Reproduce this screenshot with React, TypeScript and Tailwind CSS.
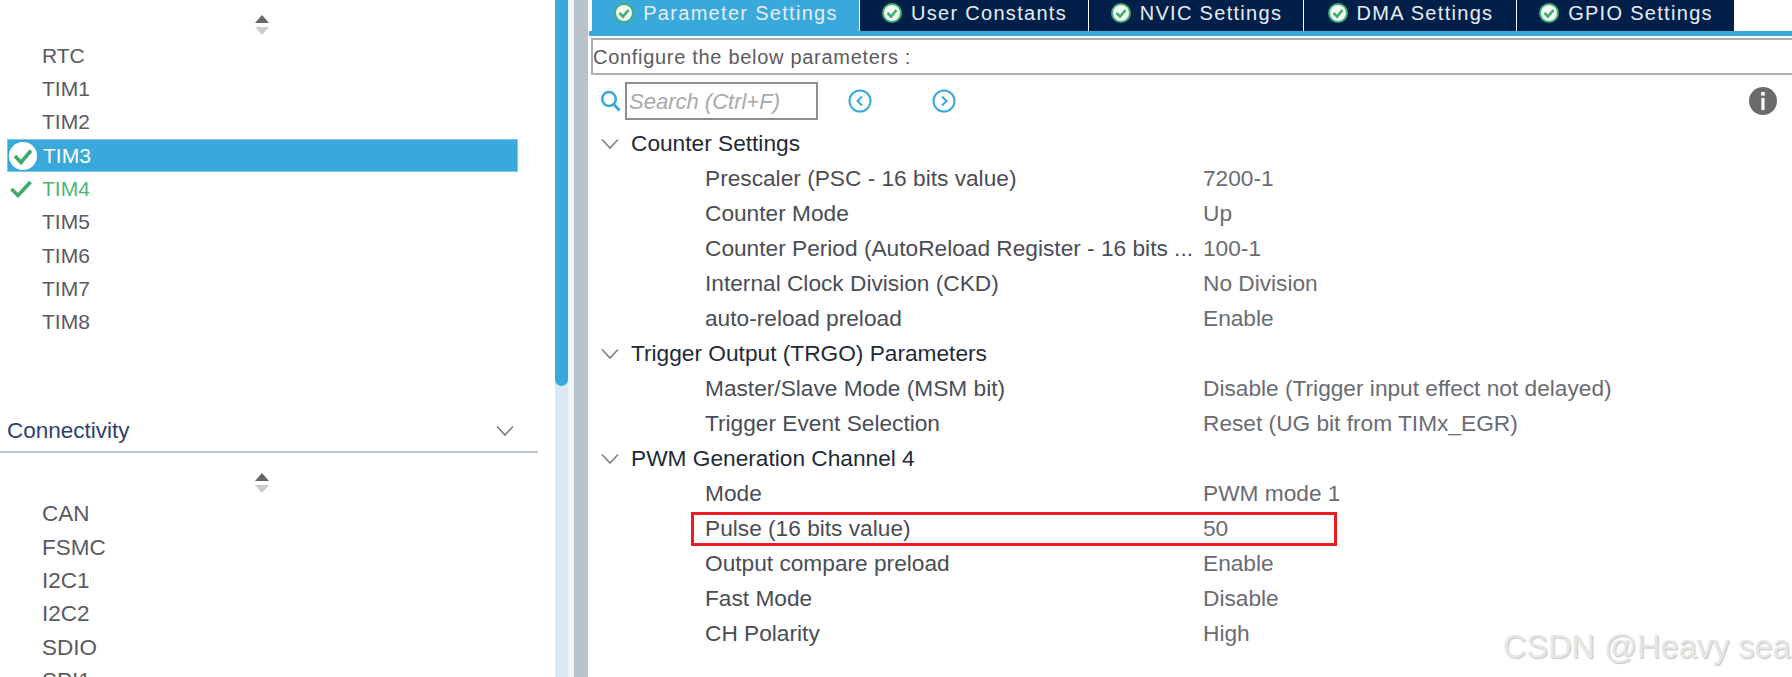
const font = "font-['Liberation_Sans',sans-serif]"

const timers = ['RTC', 'TIM1', 'TIM2', 'TIM3', 'TIM4', 'TIM5', 'TIM6', 'TIM7', 'TIM8']
const connectivity = ['CAN', 'FSMC', 'I2C1', 'I2C2', 'SDIO', 'SPI1']
const tabs = [
  { label: 'Parameter Settings', width: 'w-[268px]', active: true },
  { label: 'User Constants', width: 'w-[229px]', active: false },
  { label: 'NVIC Settings', width: 'w-[215px]', active: false },
  { label: 'DMA Settings', width: 'w-[213px]', active: false },
  { label: 'GPIO Settings', width: 'w-[218px]', active: false },
]
const sections = [
  {
    title: 'Counter Settings',
    rows: [
      ['Prescaler (PSC - 16 bits value)', '7200-1'],
      ['Counter Mode', 'Up'],
      ['Counter Period (AutoReload Register - 16 bits ...', '100-1'],
      ['Internal Clock Division (CKD)', 'No Division'],
      ['auto-reload preload', 'Enable'],
    ],
  },
  {
    title: 'Trigger Output (TRGO) Parameters',
    rows: [
      ['Master/Slave Mode (MSM bit)', 'Disable (Trigger input effect not delayed)'],
      ['Trigger Event Selection', 'Reset (UG bit from TIMx_EGR)'],
    ],
  },
  {
    title: 'PWM Generation Channel 4',
    rows: [
      ['Mode', 'PWM mode 1'],
      ['Pulse (16 bits value)', '50'],
      ['Output compare preload', 'Enable'],
      ['Fast Mode', 'Disable'],
      ['CH Polarity', 'High'],
    ],
  },
]

function SortIcon() {
  return (
    <svg width="16" height="20" viewBox="0 0 16 20" className="block">
      <path d="M8 0 L15 8 L1 8 Z" fill="#666" />
      <path d="M1 12 L15 12 L8 20 Z" fill="#ccc" />
    </svg>
  )
}

function Chevron({ className, color = '#777' }: { className?: string; color?: string }) {
  return (
    <svg width="20" height="12" viewBox="0 0 20 12" className={className}>
      <path d="M2 1.5 L10 10 L18 1.5" fill="none" stroke={color} strokeWidth="1.6" />
    </svg>
  )
}

function TabCheck() {
  return (
    <svg width="22" height="22" viewBox="0 0 22 22" className="shrink-0">
      <circle cx="11" cy="11" r="10" fill="#3fae6c" />
      <circle cx="11" cy="11" r="8" fill="#f2f8f4" />
      <path d="M6.5 11 L10 14.5 L15.5 8" fill="none" stroke="#3fae6c" strokeWidth="2.6" />
    </svg>
  )
}

function NavCircle({ dir }: { dir: 'left' | 'right' }) {
  return (
    <svg width="24" height="24" viewBox="0 0 24 24">
      <circle cx="12" cy="12" r="10.5" fill="none" stroke="#39a9dc" strokeWidth="2" />
      <path
        d={dir === 'left' ? 'M14 7.5 L9.5 12 L14 16.5' : 'M10 7.5 L14.5 12 L10 16.5'}
        fill="none"
        stroke="#39a9dc"
        strokeWidth="2"
      />
    </svg>
  )
}

function ListRow({ name }: { name: string }) {
  if (name === 'TIM3') {
    return (
      <div className="h-[33.3px] ml-[7px] w-[511px] bg-[#39a9dc] border border-[#7cc8ea] flex items-center text-white">
        <svg width="30" height="30" viewBox="0 0 30 30" className="shrink-0">
          <circle cx="15" cy="15" r="14" fill="#fff" />
          <path d="M7 15 L13 21.5 L23 9.5" fill="none" stroke="#3cab6b" strokeWidth="3.6" />
        </svg>
        <span className="ml-[5px]">{name}</span>
      </div>
    )
  }
  if (name === 'TIM4') {
    return (
      <div className="h-[33.3px] pl-[10px] flex items-center text-[#4cb57a]">
        <svg width="22" height="18" viewBox="0 0 22 18" className="shrink-0">
          <path d="M1.5 9 L8 15.5 L20.5 2" fill="none" stroke="#3cab6b" strokeWidth="3.6" />
        </svg>
        <span className="ml-[10px]">{name}</span>
      </div>
    )
  }
  return <div className="h-[33.3px] pl-[42px] flex items-center text-[#5a5a62]">{name}</div>
}

export default function App() {
  return (
    <div className={`relative h-[677px] w-[1792px] overflow-hidden bg-white flex text-[21px] ${font}`}>
      {/* left list */}
      <aside className="w-[555px] shrink-0 pr-[17px]">
        <div className="h-[39px] flex justify-center pt-[15px] pr-[15px]">
          <SortIcon />
        </div>
        {timers.map(t => (
          <ListRow key={t} name={t} />
        ))}
        <div className="mt-[76px] h-[38px] pl-[7px] pr-[23px] flex items-center justify-between border-b-2 border-[#b8c6d0] text-[#2f3f70] text-[22.5px]">
          <span className="mb-[3px]">Connectivity</span>
          <Chevron className="mb-1" />
        </div>
        <div className="h-[45px] flex justify-center pt-[20px] pr-[15px]">
          <SortIcon />
        </div>
        <div className="text-[22.5px]">
          {connectivity.map(c => (
            <ListRow key={c} name={c} />
          ))}
        </div>
      </aside>

      {/* scrollbars */}
      <div className="w-[13px] shrink-0 bg-[#d8e8f5]">
        <div className="h-[386px] bg-[#39a9dc] rounded-b-[7px]" />
      </div>
      <div className="w-[6px] shrink-0 bg-[#f0f4f7]" />
      <div className="w-[14px] shrink-0 bg-[#b8c4cc]" />

      {/* main panel */}
      <main className="flex-1 min-w-0 pl-[1px]">
        <div className="pl-[3px] flex h-[31px] text-[#e8eef4] text-[20px] tracking-[1.3px]">
          {tabs.map(tab => (
            <div
              key={tab.label}
              className={`${tab.width} flex items-center justify-center gap-[8px] pb-[5px] border-r border-white ${tab.active ? 'bg-[#39a9dc]' : 'bg-[#00204a]'}`}
            >
              <TabCheck />
              <span>{tab.label}</span>
            </div>
          ))}
        </div>
        <div className="h-[5px] bg-[#39a9dc]" />
        <div className="mt-[2px] ml-[2px] h-[37px] border-2 border-r-0 border-[#aab0b4] flex items-center text-[#5d5a60] text-[20px] tracking-[0.7px]">
          Configure the below parameters :
        </div>
        <div className="mt-[7px] h-[38px] flex items-center pl-[11px]">
          <svg width="21" height="22" viewBox="0 0 21 22" className="shrink-0">
            <ellipse cx="9" cy="9" rx="6.8" ry="7" fill="none" stroke="#39a9dc" strokeWidth="2.6" />
            <path d="M14 14.5 L19.5 20.5" stroke="#39a9dc" strokeWidth="2.8" />
          </svg>
          <div className="ml-[4px] w-[193px] h-[38px] border-2 border-[#8a8f92] pl-[2px] flex items-center italic text-[#a9a9a9] text-[22px]">
            Search (Ctrl+F)
          </div>
          <div className="ml-[30px]">
            <NavCircle dir="left" />
          </div>
          <div className="ml-[60px]">
            <NavCircle dir="right" />
          </div>
          <svg width="28" height="28" viewBox="0 0 28 28" className="ml-[793px] shrink-0">
            <circle cx="14" cy="14" r="14" fill="#6b6b6b" />
            <rect x="12.2" y="5" width="3.6" height="3.6" fill="#fff" />
            <rect x="12.4" y="11" width="3.2" height="12" fill="#fff" />
          </svg>
        </div>
        <div className="mt-[6px] text-[22.7px]">
          {sections.map(section => (
            <div key={section.title}>
              <div className="h-[35px] flex items-center pl-[11px] text-[#222a36]">
                <Chevron className="shrink-0" color="#808080" />
                <span className="ml-[11px]">{section.title}</span>
              </div>
              {section.rows.map(([label, value]) => (
                <div key={label} className="h-[35px] flex items-center pl-[116px] text-[#4a4d55]">
                  <span className="w-[498px] shrink-0 overflow-hidden whitespace-nowrap">{label}</span>
                  <span className="text-[#6a6c72] whitespace-nowrap">{value}</span>
                </div>
              ))}
            </div>
          ))}
        </div>
      </main>

      {/* annotation over the screenshot */}
      <div className="absolute left-[691px] top-[512px] w-[646px] h-[34px] border-[3px] border-[#ed1c24]" />
      <div className="absolute left-[1503px] top-[628px] text-[32.5px] leading-[38px] whitespace-nowrap text-[#e6e6e6] [text-shadow:1px_1px_1px_#c4c4c4]">
        CSDN @Heavy sea
      </div>
    </div>
  )
}
